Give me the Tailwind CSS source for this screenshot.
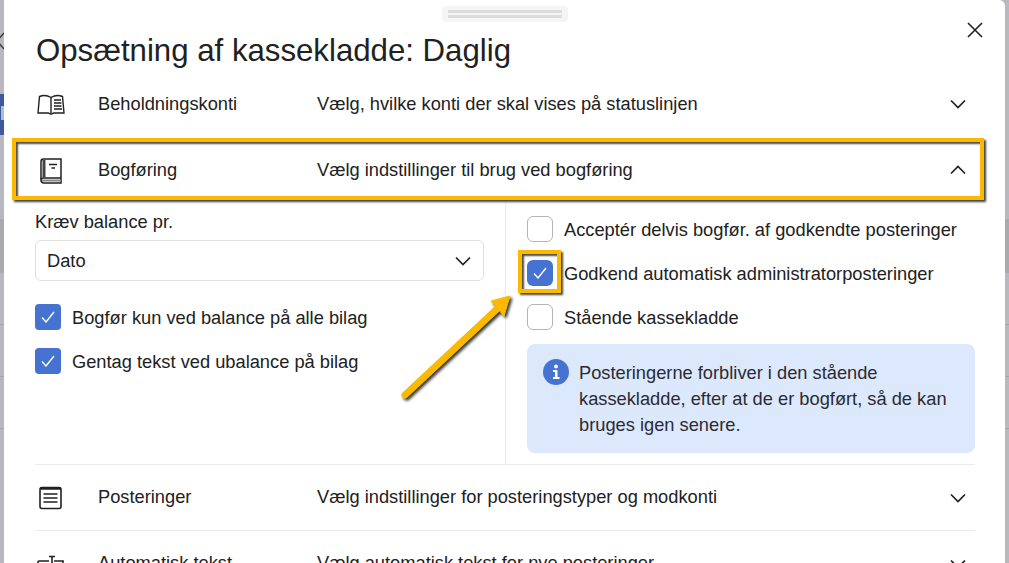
<!doctype html>
<html lang="da">
    <head>
        <meta charset="UTF-8" />
        <title>Opsætning af kassekladde</title>
        <script src="https://cdn.jsdelivr.net/npm/@tailwindcss/browser@4"></script>
    </head>
    <body class="relative w-[1009px] h-[563px] overflow-hidden bg-[#b8b8c0] font-['Liberation_Sans',Arial,sans-serif] text-[#212121]">
        <!-- baggrund bag panelet -->
        <div class="absolute left-0 top-[94px] w-[4px] h-[41px] bg-[#3d5a9e]"></div>
        <div class="absolute left-[1px] top-[106px] w-[3px] h-[14px] bg-[#b4bccf]"></div>
        <div class="absolute left-0 right-0 top-[219px] h-[54px] bg-[#a9a9b0]"></div>
        <div class="absolute left-0 right-0 top-[324px] h-px bg-[#a5a5ad]"></div>
        <div class="absolute left-0 right-0 top-[376px] h-px bg-[#a5a5ad]"></div>
        <div class="absolute left-0 right-0 top-[428px] h-px bg-[#a5a5ad]"></div>
        <svg class="absolute left-0 top-[32px]" width="4" height="18" viewBox="0 0 4 18" fill="none" stroke="#333" stroke-width="1.3"><path d="M4 1 -3 9 4 17" /></svg>

        <!-- panel -->
        <div class="relative ml-[4px] w-[1001px] h-[563px] bg-white rounded-tr-md overflow-hidden">
            <!-- greb -->
            <div class="absolute left-[438px] top-[6px] w-[126px] h-[16px] rounded-[4px] bg-[#f5f5f5] flex flex-col justify-center gap-[2px] px-[6px]">
                <div class="h-[3px] bg-[#dcdcdc]"></div>
                <div class="h-[3px] bg-[#dcdcdc]"></div>
            </div>
            <!-- luk -->
            <svg class="absolute left-[963px] top-[22px]" width="16" height="16" viewBox="0 0 16 16" fill="none" stroke="#212121" stroke-width="1.6"><path d="M1 1 15 15M15 1 1 15" /></svg>

            <div class="pl-[31px] pr-[30px]">
                <h1 class="pl-px pt-[33px] h-[71px] text-[31.2px] leading-[36px] font-normal whitespace-nowrap">Opsætning af kassekladde: Daglig</h1>

                <!-- Beholdningskonti -->
                <div class="flex items-center h-[66px] text-[18.28px]">
                    <svg class="w-[63px] shrink-0 pl-[2px]" width="28" height="22" viewBox="0 0 28 22" preserveAspectRatio="xMinYMid meet" fill="none" stroke="#212121" stroke-width="1.4">
                        <path d="M2.5 3.5C6 2 10 2 14 4.5 18 2 22 2 25.5 3.5L27 20H17C15.5 20 15 21 14 21 13 21 12.500 20 11 20H1L2.500 3.500Z" />
                        <path d="M14 4.500V20M17 7H24M17 10H24.500M17 13H24.500M17 16H25" />
                    </svg>
                    <span class="w-[219px] shrink-0">Beholdningskonti</span>
                    <span class="flex-1">Vælg, hvilke konti der skal vises på statuslinjen</span>
                    <svg class="mr-[9px]" width="16" height="10" viewBox="0 0 16 10" fill="none" stroke="#212121" stroke-width="1.7"><path d="M1 1.500 8 8.500 15 1.500" /></svg>
                </div>

                <!-- Bogføring -->
                <div class="flex items-center h-[66px] text-[18.28px]">
                    <svg class="w-[63px] shrink-0 pl-[5px] mt-[2px]" width="26" height="26" viewBox="0 0 26 26" preserveAspectRatio="xMinYMid meet" fill="none" stroke="#212121" stroke-width="1.5">
                        <path d="M1 22V3.500C1 2 2 1 3.500 1H21V25H4C2 25 1 24 1 22Z" />
                        <path d="M1 21.500C1 20.500 2 20 3.500 20H21" />
                        <path d="M4 2V19.500" stroke-width="3" stroke="#444" />
                        <path d="M9 6.500H17M11.500 10H15" />
                        <path d="M2 22.500H21" stroke="#888" stroke-width="2" />
                    </svg>
                    <span class="w-[219px] shrink-0">Bogføring</span>
                    <span class="flex-1">Vælg indstillinger til brug ved bogføring</span>
                    <svg class="mr-[9px]" width="16" height="10" viewBox="0 0 16 10" fill="none" stroke="#212121" stroke-width="1.7"><path d="M1 8.500 8 1.500 15 8.500" /></svg>
                </div>

                <!-- indhold -->
                <div class="flex h-[262px] border-b border-[#ebebeb]">
                    <div class="w-[471px] pr-[21px] pt-[9px] border-r border-[#ebebeb]">
                        <div class="h-[20px] leading-[20px] text-[18.28px]">Kræv balance pr.</div>
                        <div class="mt-[8px] flex items-center justify-between h-[41px] pl-[11px] pr-[12px] border border-[#e0e0e0] rounded-[6px] text-[18.28px]">
                            <span>Dato</span>
                            <svg width="16" height="10" viewBox="0 0 16 10" fill="none" stroke="#212121" stroke-width="1.7"><path d="M1 1.500 8 8.500 15 1.500" /></svg>
                        </div>
                        <div class="mt-[23px] flex items-center gap-[11px] h-[26px] text-[18.28px]">
                            <div class="w-[26px] h-[26px] rounded-[4px] bg-[#4673d1] flex items-center justify-center">
                                <svg width="14" height="12" viewBox="0 0 14 12" fill="none" stroke="white" stroke-width="1.4"><path d="M1 6.500 5 11 13 1" /></svg>
                            </div>
                            <span class="pt-[2px]">Bogfør kun ved balance på alle bilag</span>
                        </div>
                        <div class="mt-[18px] flex items-center gap-[11px] h-[26px] text-[18.28px]">
                            <div class="w-[26px] h-[26px] rounded-[4px] bg-[#4673d1] flex items-center justify-center">
                                <svg width="14" height="12" viewBox="0 0 14 12" fill="none" stroke="white" stroke-width="1.4"><path d="M1 6.500 5 11 13 1" /></svg>
                            </div>
                            <span class="pt-[2px]">Gentag tekst ved ubalance på bilag</span>
                        </div>
                    </div>
                    <div class="flex-1 pl-[21px] pt-[13px]">
                        <div class="flex items-center gap-[11px] h-[26px] text-[18.28px]">
                            <div class="w-[26px] h-[26px] rounded-[6px] border border-[#b5b5b5] bg-white"></div>
                            <span class="pt-[2px]">Acceptér delvis bogfør. af godkendte posteringer</span>
                        </div>
                        <div class="mt-[18px] flex items-center gap-[11px] h-[26px] text-[18.28px]">
                            <div class="w-[26px] h-[26px] rounded-[6px] bg-[#4673d1] flex items-center justify-center">
                                <svg width="14" height="12" viewBox="0 0 14 12" fill="none" stroke="white" stroke-width="1.4"><path d="M1 6.500 5 11 13 1" /></svg>
                            </div>
                            <span class="pt-[2px]">Godkend automatisk administratorposteringer</span>
                        </div>
                        <div class="mt-[18px] flex items-center gap-[11px] h-[26px] text-[18.28px]">
                            <div class="w-[26px] h-[26px] rounded-[6px] border border-[#b5b5b5] bg-white"></div>
                            <span class="pt-[2px]">Stående kassekladde</span>
                        </div>
                        <div class="mt-[14px] flex gap-[10px] h-[109px] w-[448px] rounded-[8px] bg-[#dce8fc] pl-[16px] pt-[15px] pr-[20px] text-[18.28px] leading-[26px] text-[#2b2b33]">
                            <svg class="shrink-0" width="26" height="26" viewBox="0 0 26 26">
                                <circle cx="13" cy="13" r="13" fill="#4673d1" />
                                <circle cx="13" cy="7.500" r="2" fill="white" />
                                <path d="M10 11H14.500V18H16.500V20H10V18H12V13H10Z" fill="white" />
                            </svg>
                            <p class="mt-px">Posteringerne forbliver i den stående kassekladde, efter at de er bogført, så de kan bruges igen senere.</p>
                        </div>
                    </div>
                </div>

                <!-- Posteringer -->
                <div class="flex items-center h-[66px] border-b border-[#ebebeb] text-[18.28px]">
                    <svg class="w-[63px] shrink-0 pl-[4px]" width="28" height="24" viewBox="0 0 28 24" preserveAspectRatio="xMinYMid meet" fill="none" stroke="#212121">
                        <rect x="1" y="1.500" width="21" height="21" rx="2" stroke-width="1.6" />
                        <path d="M1 2.500H22" stroke-width="2.500" />
                        <path d="M4.500 8H18.500M4.500 12H18.500M4.500 16H18.500" stroke-width="1.500" />
                    </svg>
                    <span class="w-[219px] shrink-0 pb-[2px]">Posteringer</span>
                    <span class="flex-1 pb-[2px]">Vælg indstillinger for posteringstyper og modkonti</span>
                    <svg class="mr-[9px]" width="16" height="10" viewBox="0 0 16 10" fill="none" stroke="#212121" stroke-width="1.7"><path d="M1 1.500 8 8.500 15 1.500" /></svg>
                </div>

                <!-- Automatisk tekst -->
                <div class="flex items-center h-[66px] text-[18.28px]">
                    <svg class="w-[63px] shrink-0 pl-[2px] mt-[6px]" width="28" height="24" viewBox="0 0 28 24" preserveAspectRatio="xMinYMid meet" fill="none" stroke="#212121" stroke-width="1.6">
                        <path d="M1 8V7C1 6.500 1.500 6 2 6H12M17 6H26V8" />
                        <path d="M12 1.500H18M15 1.500V12" />
                    </svg>
                    <span class="w-[219px] shrink-0 pb-[2px]">Automatisk tekst</span>
                    <span class="flex-1 pb-[2px]">Vælg automatisk tekst for nye posteringer</span>
                    <svg class="mr-[9px]" width="16" height="10" viewBox="0 0 16 10" fill="none" stroke="#212121" stroke-width="1.7"><path d="M1 1.500 8 8.500 15 1.500" /></svg>
                </div>
            </div>
        </div>

        <!-- markeringer oven på skærmbilledet -->
        <div class="absolute left-[12px] top-[138px] w-[972px] h-[62px] border-[4px] border-[#fbb900] shadow-[2px_2px_2px_rgba(0,0,0,0.75),inset_2px_2px_2px_rgba(0,0,0,0.7)]"></div>
        <div class="absolute left-[518px] top-[250px] w-[43px] h-[43px] border-[4px] border-[#fbb900] shadow-[2px_2px_2px_rgba(0,0,0,0.75),inset_2px_2px_2px_rgba(0,0,0,0.7)]"></div>
        <svg class="absolute left-[395px] top-[290px] drop-shadow-[2px_2px_1.5px_rgba(0,0,0,0.8)]" width="125" height="118" viewBox="0 0 125 118" fill="none">
            <path d="M10 105 102 19" stroke="#fbb900" stroke-width="7" stroke-linecap="round" />
            <path d="M115 6 96 11 109 26Z" fill="#fbb900" stroke="#fbb900" stroke-linejoin="round" />
        </svg>
    </body>
</html>
